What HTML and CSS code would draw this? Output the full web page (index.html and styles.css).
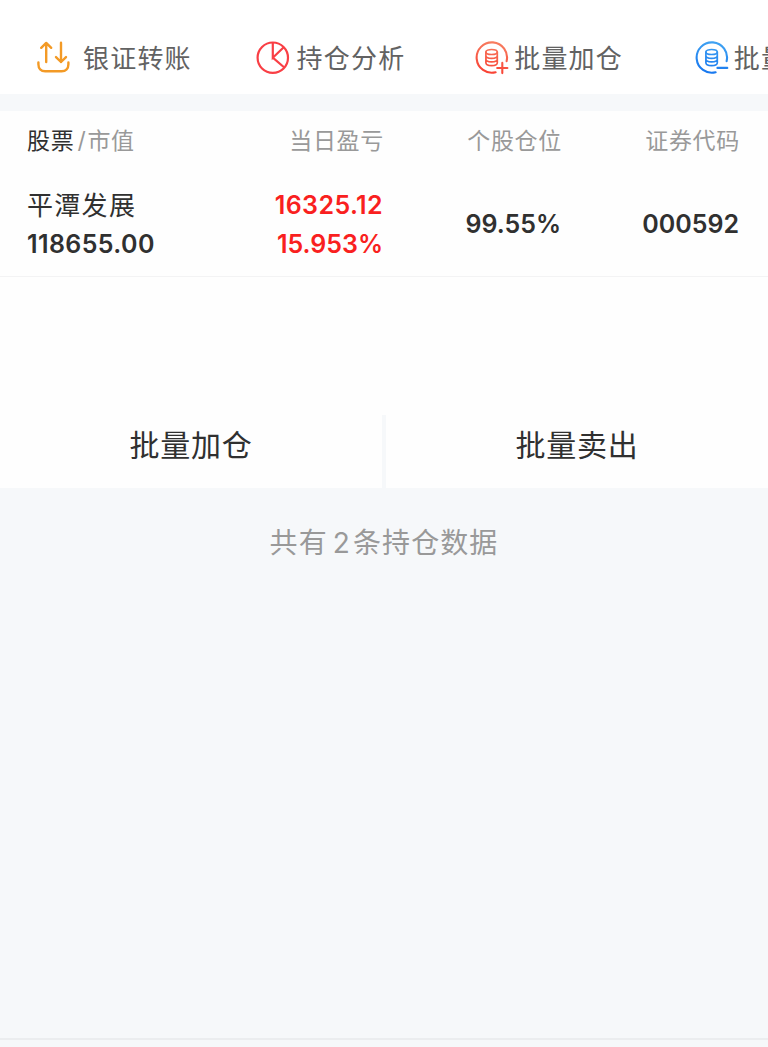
FILE: index.html
```html
<!DOCTYPE html>
<html lang="zh-CN">
<head>
<meta charset="utf-8">
<title>持仓</title>
<link rel="stylesheet" href="styles.css">
</head>
<body>
<nav class="toolbar">
  <a class="tool tool-transfer">
    <svg class="icon" viewBox="0 0 34 34" fill="none" stroke="#f39a26" stroke-width="2.400" stroke-linecap="round" stroke-linejoin="round">
      <path d="M10.200 21V2.200M5.200 6.800l5-4.900 5 4.900M25 1.800v19.200M20 16.100l5 4.900 5-4.900M2.400 21.500v1.800c0 4.200 2.500 7 6.800 7h16.400c4.300 0 6.800-2.800 6.800-7v-1.800"/>
    </svg>
    <span>银证转账</span>
  </a>
  <a class="tool">
    <svg class="icon" viewBox="0 0 34 34" fill="none" stroke="#f93f45" stroke-width="2.200">
      <circle cx="16.800" cy="16.700" r="15.200"/>
      <path d="M16.800 1.500v15.200L28 6M16.800 16.700l11.500 9.800"/>
    </svg>
    <span>持仓分析</span>
  </a>
  <a class="tool tool-tight">
    <svg class="icon" viewBox="0 0 34 34" fill="none" stroke="url(#warm)" stroke-width="2.100" stroke-linecap="round">
      <defs><linearGradient id="warm" gradientUnits="userSpaceOnUse" x1="20" y1="1" x2="13" y2="33"><stop offset="0" stop-color="#f77d60"/><stop offset="1" stop-color="#f93f32"/></linearGradient></defs>
      <path d="M20.600 31.300A15.200 15.200 0 1 1 31.600 20.200"/>
      <path stroke-width="1.700" d="M10.900 11v10.800c0 3.800 11.400 3.800 11.400 0V11M10.900 14.700c0 3.500 11.400 3.500 11.400 0M10.900 18.200c0 3.500 11.400 3.500 11.400 0"/>
      <ellipse stroke-width="1.700" cx="16.600" cy="11" rx="5.700" ry="2.500"/>
      <path d="M22.200 27h10.200M27.300 21.900v10.200"/>
    </svg>
    <span>批量加仓</span>
  </a>
  <a class="tool tool-tight">
    <svg class="icon" viewBox="0 0 34 34" fill="none" stroke="url(#cool)" stroke-width="2.100" stroke-linecap="round">
      <defs><linearGradient id="cool" gradientUnits="userSpaceOnUse" x1="20" y1="1" x2="13" y2="33"><stop offset="0" stop-color="#3fa2f2"/><stop offset="1" stop-color="#1676ef"/></linearGradient></defs>
      <path d="M20.600 31.300A15.200 15.200 0 1 1 31.600 20.200"/>
      <path stroke-width="1.700" d="M10.900 11v10.800c0 3.800 11.400 3.800 11.400 0V11M10.900 14.700c0 3.500 11.400 3.500 11.400 0M10.900 18.200c0 3.500 11.400 3.500 11.400 0"/>
      <ellipse stroke-width="1.700" cx="16.600" cy="11" rx="5.700" ry="2.500"/>
      <path d="M22.400 26.900h9.900"/>
    </svg>
    <span>批量</span>
  </a>
</nav>
<main class="holdings">
  <div class="grid head">
    <div><span class="active">股票</span><span class="slash">/</span>市值</div>
    <div class="right">当日盈亏</div>
    <div class="right">个股仓位</div>
    <div class="right">证券代码</div>
  </div>
  <div class="grid row">
    <div><div class="name">平潭发展</div><div class="num wide">118655.00</div></div>
    <div class="right gain"><div class="num wide">16325.12</div><div class="num">15.953%</div></div>
    <div class="right num">99.55%</div>
    <div class="right num">000592</div>
  </div>
  <div class="blank"></div>
  <div class="actions">
    <button class="action">批量加仓</button>
    <i class="divider"></i>
    <button class="action">批量卖出</button>
  </div>
</main>
<p class="summary">共有<span class="count">2</span>条持仓数据</p>
<footer class="bottom"></footer>
</body>
</html>
```

FILE: styles.css
```css
* { box-sizing: border-box; }
body {
  margin: 0;
  height: 1047px;
  display: flex;
  flex-direction: column;
  overflow: hidden;
  background: #f6f8fa;
  color: #303030;
  font-family: Inter, "Noto Sans CJK SC", sans-serif;
}
.toolbar {
  flex: none;
  height: 94px;
  padding: 22px 0 0 36px;
  display: flex;
  overflow: hidden;
  background: #fff;
  color: #626262;
  font-size: 26px;
  letter-spacing: 1.2px;
  line-height: 72px;
}
.tool {
  flex: 0 0 219.6px;
  display: flex;
  align-items: center;
  gap: 7px;
  white-space: nowrap;
}
.tool span { padding-top: 2px; }
.tool-transfer { gap: 13px; }
.tool-tight { gap: 5px; }
.icon { width: 34px; height: 34px; flex: none; }
.holdings {
  flex: none;
  margin-top: 17px;
  height: 377px;
  display: flex;
  flex-direction: column;
  background: #fefefe;
}
.grid {
  display: grid;
  grid-template-columns: 178px 178px 178px 178px;
  padding-left: 27px;
  white-space: nowrap;
}
.head {
  height: 60px;
  line-height: 60px;
  color: #999;
  font-size: 23px;
  letter-spacing: .7px;
}
.head .right { position: relative; left: 1px; }
.active { color: #303030; }
.slash { margin: 0 1px 0 3px; }
.right { text-align: right; }
.row {
  height: 106px;
  padding-top: 15px;
  align-items: start;
  border-bottom: 1px solid #f3f3f4;
}
.name { font-size: 26px; line-height: 39px; letter-spacing: 1.3px; }
.num { font-size: 25px; line-height: 39px; font-weight: 600; }
.wide { letter-spacing: .4px; }
.row > .num { line-height: 76px; }
.gain { color: #f91f20; }
.blank { flex: 1; }
.actions { display: flex; height: 73px; }
.action {
  flex: 1;
  padding: 0 0 18px;
  border: 0;
  background: none;
  color: #303030;
  font: inherit;
  font-size: 30px;
  letter-spacing: .7px;
}
.divider { width: 4px; background: #f6f8fa; }
.summary {
  flex: 1;
  margin: 0;
  padding-top: 34px;
  text-align: center;
  color: #999;
  font-size: 28px;
  line-height: 42px;
  letter-spacing: 1.1px;
}
.count { margin: 0 2px 0 5px; }
.bottom { height: 9px; border-top: 2px solid #ebedef; }
```
